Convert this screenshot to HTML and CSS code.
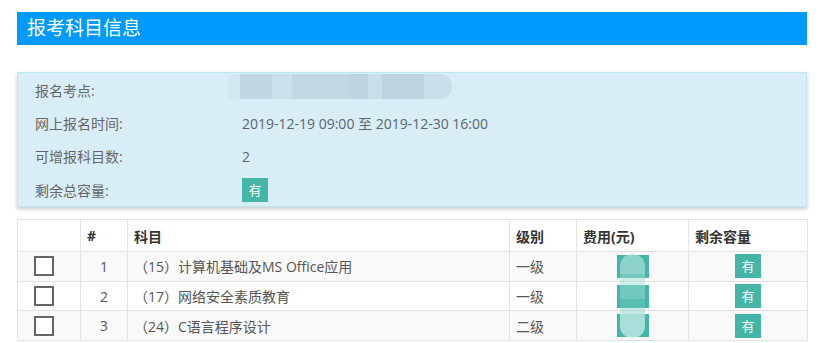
FILE: index.html
```html
<!DOCTYPE html>
<html lang="zh-CN">
<head>
    <meta charset="UTF-8">
    <title>报考科目信息</title>
    <link rel="stylesheet" href="styles.css">
</head>
<body>
    <div class="container">
        <div class="title-bar">报考科目信息</div>

        <div class="info-box">
            <div class="info-row">
                <span class="info-label">报名考点:</span>
                <span class="info-value"><span class="blur-addr"></span></span>
            </div>
            <div class="info-row">
                <span class="info-label">网上报名时间:</span>
                <span class="info-value">2019-12-19 09:00 至 2019-12-30 16:00</span>
            </div>
            <div class="info-row">
                <span class="info-label">可增报科目数:</span>
                <span class="info-value">2</span>
            </div>
            <div class="info-row">
                <span class="info-label">剩余总容量:</span>
                <span class="info-value"><span class="badge">有</span></span>
            </div>
        </div>

        <div class="table-wrap">
            <table class="subject-table">
                <colgroup>
                    <col class="c-check">
                    <col class="c-no">
                    <col class="c-name">
                    <col class="c-level">
                    <col class="c-fee">
                    <col class="c-cap">
                </colgroup>
                <thead>
                    <tr>
                        <th></th>
                        <th>#</th>
                        <th>科目</th>
                        <th>级别</th>
                        <th>费用(元)</th>
                        <th>剩余容量</th>
                    </tr>
                </thead>
                <tbody>
                    <tr>
                        <td class="check-cell"><span class="checkbox"></span></td>
                        <td class="center">1</td>
                        <td>（15）计算机基础及MS Office应用</td>
                        <td>一级</td>
                        <td class="center"><span class="badge fee"></span></td>
                        <td class="center"><span class="badge">有</span></td>
                    </tr>
                    <tr>
                        <td class="check-cell"><span class="checkbox"></span></td>
                        <td class="center">2</td>
                        <td>（17）网络安全素质教育</td>
                        <td>一级</td>
                        <td class="center"><span class="badge fee"></span></td>
                        <td class="center"><span class="badge">有</span></td>
                    </tr>
                    <tr>
                        <td class="check-cell"><span class="checkbox"></span></td>
                        <td class="center">3</td>
                        <td>（24）C语言程序设计</td>
                        <td>二级</td>
                        <td class="center"><span class="badge fee"></span></td>
                        <td class="center"><span class="badge">有</span></td>
                    </tr>
                </tbody>
            </table>
            <div class="fee-blur"></div>
        </div>
    </div>
</body>
</html>
```

FILE: styles.css
```css
body {
    font-family: "Open Sans", "Noto Sans CJK SC", sans-serif;
    font-size: 14px;
    color: #555;
    background-color: #fff;
    margin: 0;
}
.container {
    width: 790px;
    padding: 12px 0 0 17px;
}
.title-bar {
    height: 33px;
    line-height: 33px;
    background-color: #0099fe;
    color: #fff;
    font-size: 19px;
    padding-left: 10px;
}
.info-box {
    margin-top: 27px;
    height: 133px;
    padding-top: 0;
    background-color: #d9edf7;
    border: 1px solid #bce8f1;
    box-shadow: 0 2px 4px rgba(0, 0, 0, 0.22);
}
.info-row {
    display: flex;
    align-items: center;
    height: 33.3px;
    padding-left: 17px;
}
.info-label {
    width: 207px;
    color: #666;
}
.info-value {
    display: flex;
    align-items: center;
    color: #5a6770;
}
.blur-addr {
    display: block;
    width: 224px;
    height: 25px;
    margin: -6px 0 0 -14px;
    border-radius: 0 12px 12px 0;
    background:
        linear-gradient(90deg,
            #d3e7f0 0, #d3e7f0 12px,
            #bdd5e0 12px, #bdd5e0 44px,
            #c9dfe9 44px, #c9dfe9 64px,
            #bfd6e1 64px, #bfd6e1 120px,
            #b9d3de 120px, #b9d3de 140px,
            #c6dce7 140px, #c6dce7 154px,
            #b8d1dd 154px, #b8d1dd 196px,
            #c8dde8 196px, #c8dde8 224px);
    opacity: 0.9;
}
.badge {
    display: inline-block;
    width: 26px;
    height: 24px;
    line-height: 24px;
    text-align: center;
    background-color: #45b5a8;
    color: #fff;
    font-size: 13px;
}
.badge.fee {
    width: 32px;
    height: 23px;
    vertical-align: middle;
}
.table-wrap {
    position: relative;
    margin-top: 12px;
}
.subject-table {
    width: 790px;
    border-collapse: collapse;
    table-layout: fixed;
}
.c-check { width: 63px; }
.c-no { width: 47px; }
.c-name { width: 382px; }
.c-level { width: 67px; }
.c-fee { width: 112px; }
.c-cap { width: 119px; }
.subject-table th,
.subject-table td {
    border: 1px solid #e3e3e3;
    padding: 0 6px;
    text-align: left;
    white-space: nowrap;
}
.subject-table th {
    height: 31px;
    color: #333;
    font-weight: bold;
    font-size: 14px;
}
.subject-table td {
    height: 28.7px;
    color: #555;
}
.subject-table tbody tr:nth-child(odd) {
    background-color: #f9f9f9;
}
.subject-table td.center {
    text-align: center;
}
.subject-table td.check-cell {
    padding-left: 16px;
}
.checkbox {
    display: block;
    width: 16px;
    height: 16px;
    border: 2px solid #666;
    background-color: #fff;
}
.fee-blur {
    position: absolute;
    left: 603px;
    top: 35px;
    width: 25px;
    height: 84px;
    border-radius: 12px;
    background: linear-gradient(180deg,
        rgba(200, 235, 230, 0.55) 0, rgba(200, 235, 230, 0.55) 20px,
        rgba(160, 220, 212, 0.5) 20px, rgba(160, 220, 212, 0.5) 45px,
        rgba(120, 205, 195, 0.4) 45px, rgba(120, 205, 195, 0.4) 60px,
        rgba(210, 240, 236, 0.7) 60px, rgba(210, 240, 236, 0.7) 84px);
}
```
